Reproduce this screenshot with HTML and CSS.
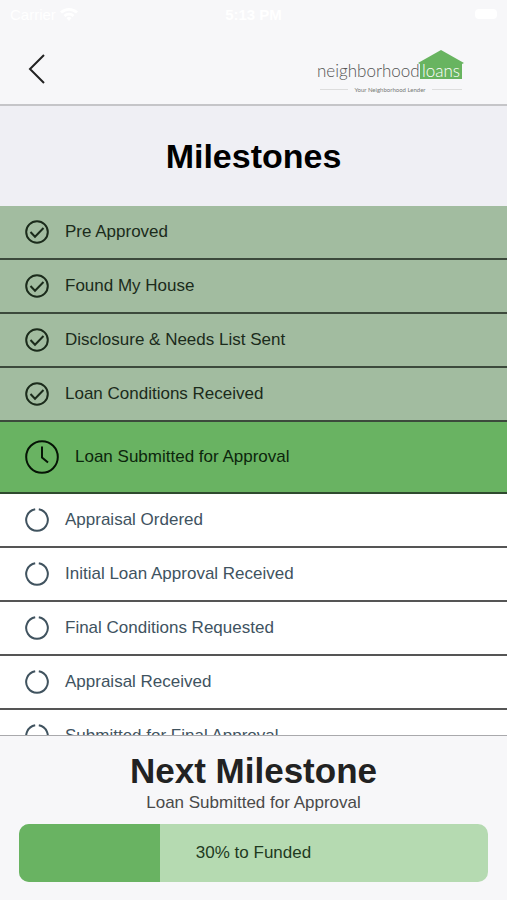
FILE: index.html
```html
<!DOCTYPE html>
<html lang="en">
<head>
<meta charset="UTF-8">
<meta name="viewport" content="width=device-width, initial-scale=1.0">
<title>Milestones</title>
<link rel="stylesheet" href="styles.css">
</head>
<body>
<svg class="icon-defs" aria-hidden="true">
    <symbol id="icon-check" viewBox="0 0 24 24">
        <circle cx="12" cy="12" r="10.8"/>
        <path d="M5.500 12l4.500 4.700L18.500 8"/>
    </symbol>
    <symbol id="icon-clock" viewBox="0 0 34 34">
        <circle cx="17" cy="17" r="15.8"/>
        <path d="M17 6.500v11l6 5"/>
    </symbol>
    <symbol id="icon-pending" viewBox="0 0 24 24">
        <path d="M13.800 1.300A10.800 10.800 0 1 1 10.200 1.300"/>
    </symbol>
</svg>
<div class="app">
    <header class="top">
        <div class="status-bar">
            <span class="carrier">Carrier
                <svg class="wifi" viewBox="0 0 18 14"><path d="M0 4.500a13 13 0 0 1 18 0l-2 2a10 10 0 0 0-14 0zM3.500 8a8 8 0 0 1 11 0l-2 2a5 5 0 0 0-7 0zM6.500 11a4 4 0 0 1 5 0L9 14z"/></svg>
            </span>
            <span class="time">5:13 PM</span>
            <span class="battery"></span>
        </div>
        <div class="nav">
            <button class="back-btn" aria-label="Back">
                <svg viewBox="0 0 18 32"><path d="M16 2L2 16l14 14"/></svg>
            </button>
            <svg class="logo" viewBox="0 0 148 48" role="img" aria-label="Neighborhood Loans">
                <path class="house" d="M101 18L124 5l23 13-2 1v15h-42V19z"/>
                <text class="logo-name" x="0" y="32">neighborhood</text>
                <text class="logo-loans" x="105" y="32">loans</text>
                <path class="logo-rule" d="M3 44.500h28M115 44.500h30"/>
                <text class="logo-tag" x="73" y="47">Your Neighborhood Lender</text>
            </svg>
        </div>
    </header>
    <h1>Milestones</h1>
    <ul class="milestones">
        <li class="done"><svg><use href="#icon-check"/></svg>Pre Approved</li>
        <li class="done"><svg><use href="#icon-check"/></svg>Found My House</li>
        <li class="done"><svg><use href="#icon-check"/></svg>Disclosure &amp; Needs List Sent</li>
        <li class="done"><svg><use href="#icon-check"/></svg>Loan Conditions Received</li>
        <li class="current"><svg><use href="#icon-clock"/></svg>Loan Submitted for Approval</li>
        <li><svg><use href="#icon-pending"/></svg>Appraisal Ordered</li>
        <li><svg><use href="#icon-pending"/></svg>Initial Loan Approval Received</li>
        <li><svg><use href="#icon-pending"/></svg>Final Conditions Requested</li>
        <li><svg><use href="#icon-pending"/></svg>Appraisal Received</li>
        <li><svg><use href="#icon-pending"/></svg>Submitted for Final Approval</li>
    </ul>
    <footer class="next">
        <h2>Next Milestone</h2>
        <p>Loan Submitted for Approval</p>
        <div class="progress">
            <div class="progress-fill" style="width: 30%"></div>
            <span class="progress-label">30% to Funded</span>
        </div>
    </footer>
</div>
</body>
</html>
```

FILE: styles.css
```css
* {
    box-sizing: border-box;
}
body {
    font-family: "Liberation Sans", Arial, sans-serif;
    font-size: 17px;
    background-color: #fff;
    margin: 0;
}
.icon-defs {
    position: absolute;
    width: 0;
    height: 0;
}
.app {
    display: flex;
    flex-direction: column;
    height: 100vh;
}
.top {
    flex-shrink: 0;
    background-color: #f7f7f9;
    border-bottom: 2px solid #c5c5c8;
}
.status-bar {
    display: grid;
    grid-template-columns: 1fr auto 1fr;
    align-items: center;
    height: 28px;
    padding: 0 10px;
    color: #fff;
    font-size: 15px;
}
.carrier {
    display: flex;
    align-items: center;
    gap: 4px;
}
.wifi {
    width: 18px;
    height: 14px;
    fill: #fff;
}
.time {
    font-weight: bold;
}
.battery {
    justify-self: end;
    width: 22px;
    height: 10px;
    border-radius: 4px;
    background-color: #fff;
}
.nav {
    display: flex;
    justify-content: space-between;
    align-items: center;
    height: 76px;
    padding: 6px 42px 0 27px;
}
.back-btn {
    width: 20px;
    height: 32px;
    padding: 0;
    border: none;
    background: none;
    cursor: pointer;
}
.back-btn svg {
    display: block;
    width: 20px;
    height: 32px;
    fill: none;
    stroke: #222;
    stroke-width: 2;
}
.logo {
    width: 148px;
    height: 48px;
    font-family: Lato, sans-serif;
    font-weight: 300;
}
.house {
    fill: #68b460;
}
.logo-name {
    font-size: 17px;
    fill: #555;
}
.logo-loans {
    font-size: 17px;
    fill: #fff;
}
.logo-rule {
    stroke: #ddd;
}
.logo-tag {
    font-size: 6px;
    font-weight: 400;
    text-anchor: middle;
    fill: #777;
}
h1 {
    flex-shrink: 0;
    margin: 0;
    padding: 30px 0;
    background-color: #efeff4;
    color: #000;
    font-size: 34px;
    line-height: 40px;
    text-align: center;
}
.milestones {
    flex: 1;
    min-height: 0;
    margin: 0;
    padding: 0;
    overflow: hidden;
    list-style: none;
}
.milestones li {
    display: flex;
    align-items: center;
    gap: 16px;
    height: 54px;
    padding-left: 25px;
    border-bottom: 2px solid #555;
    color: #40535f;
}
.milestones svg {
    width: 24px;
    height: 24px;
    fill: none;
    stroke: currentColor;
    stroke-width: 2;
}
.milestones .done {
    background-color: #a2bca0;
    border-color: #3c4a3c;
    color: #1b2b1b;
}
.milestones .current {
    height: 72px;
    background-color: #69b362;
    border-color: #2f4a2f;
    color: #0c260c;
}
.milestones .current svg {
    width: 34px;
    height: 34px;
    stroke: #051405;
}
.next {
    flex-shrink: 0;
    padding: 15px 19px 18px;
    background-color: #f7f7f9;
    border-top: 1px solid #a9a9ac;
    text-align: center;
}
.next h2 {
    margin: 0;
    color: #222;
    font-size: 35px;
    line-height: 40px;
}
.next p {
    margin: 0 0 9px;
    color: #4a4a4a;
    line-height: 24px;
}
.progress {
    position: relative;
    display: flex;
    align-items: center;
    justify-content: center;
    height: 58px;
    border-radius: 10px;
    background-color: #b5dab1;
    overflow: hidden;
}
.progress-fill {
    position: absolute;
    top: 0;
    bottom: 0;
    left: 0;
    background-color: #69b362;
}
.progress-label {
    position: relative;
    color: #1f3a1f;
}
```
